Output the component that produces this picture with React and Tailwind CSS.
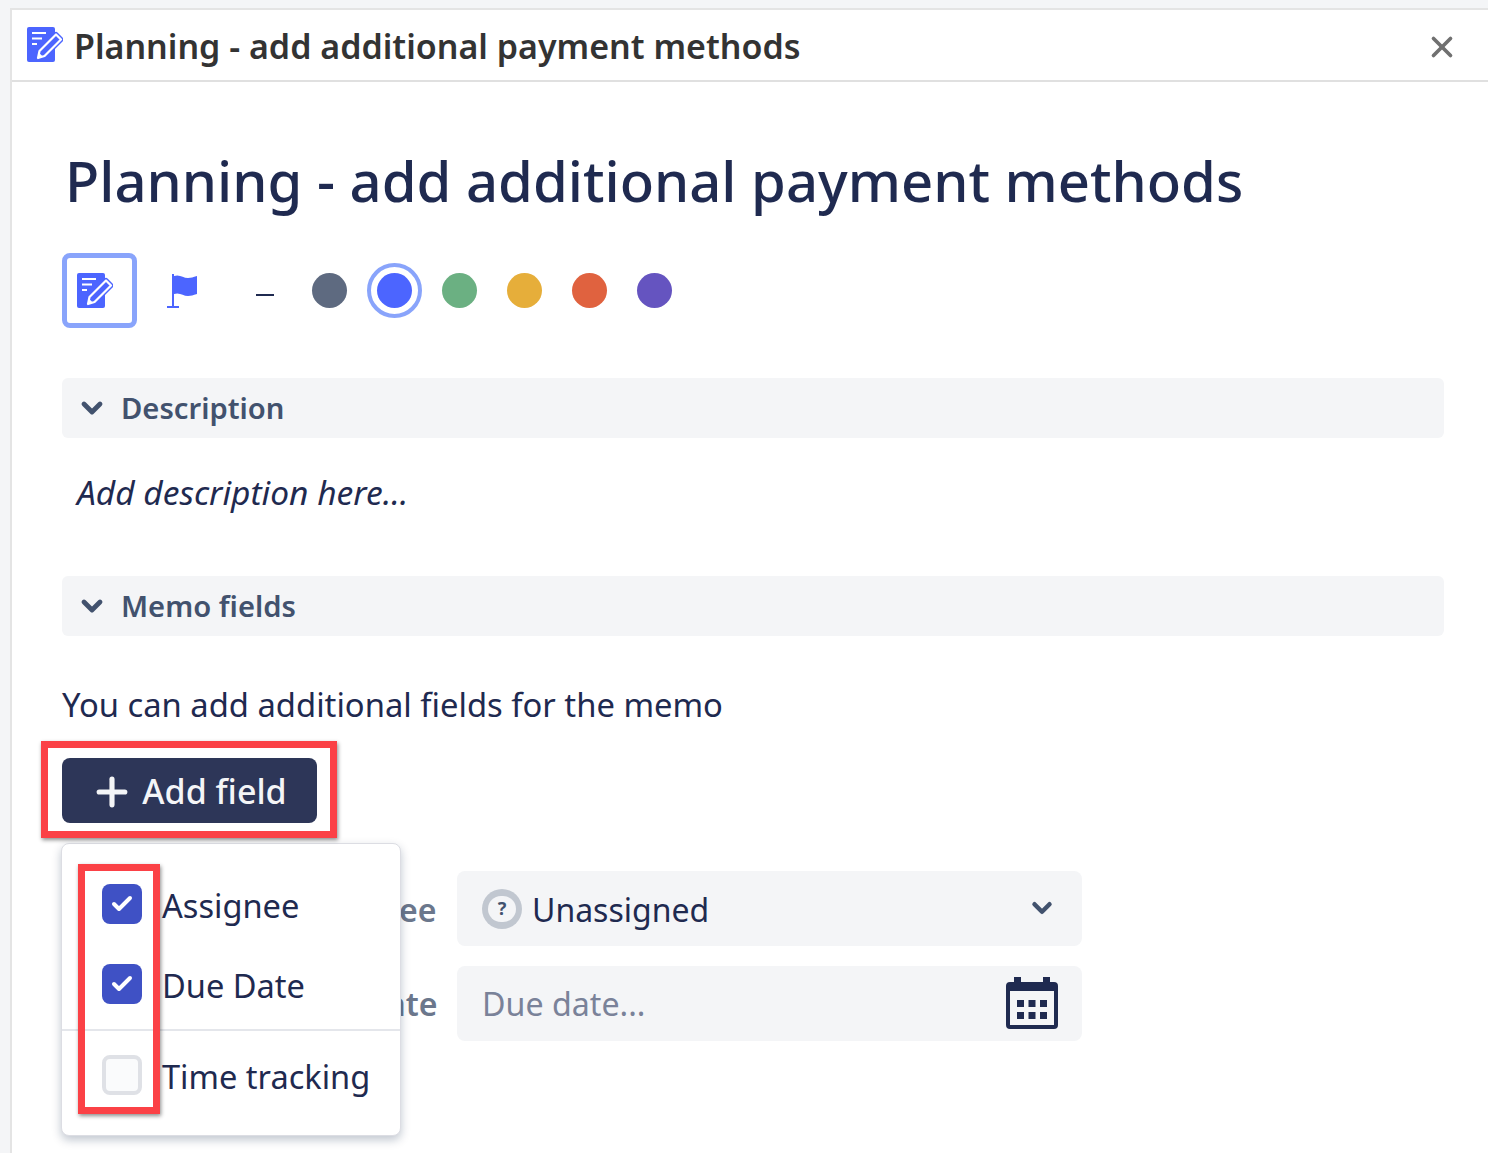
import React from "react";
import { Plus, X, ChevronDown, Check } from "lucide-react";

const PEN = "M11 31l1.5-7L29 7.5l5 5L17.5 29z";

const NoteIcon = ({ className }) => (
  <svg viewBox="0 0 36 36" className={className}>
    <rect x="0" y="0" width="28" height="35" rx="2" fill="#4c65ff" />
    <path d="M5 6h14M5 11.5h10M5 17h5" stroke="#fff" strokeWidth="2.2" />
    <path d={PEN} fill="none" stroke="#4c65ff" strokeWidth="5" strokeLinejoin="round" />
    <path d={PEN} fill="#4c65ff" stroke="#fff" strokeWidth="2.2" strokeLinejoin="round" />
    <path d="M11 31l1.2-5 3.6 3.6z" fill="#fff" />
  </svg>
);

const FlagIcon = ({ className }) => (
  <svg viewBox="0 0 32 36" className={className}>
    <path d="M2 35h12v-2H9V1H7v32H2z" fill="#4c65ff" />
    <path d="M9 3c6-2 9 2 14 2 3 0 5-1 9-2v18c-4 1-6 2-9 2-5 0-8-4-14-2z" fill="#4c65ff" />
  </svg>
);

const CalendarIcon = ({ className }) => (
  <svg viewBox="0 0 54 54" className={className}>
    <path d="M9 1h7v5h22V1h7v5h4a4 4 0 0 1 4 4v39a4 4 0 0 1-4 4H5a4 4 0 0 1-4-4V10a4 4 0 0 1 4-4h4z" fill="#1f2a50" />
    <rect x="5" y="15" width="44" height="34" fill="#f4f5f7" />
    <path d="M12 24h7v7h-7zM23.5 24h7v7h-7zM35 24h7v7h-7zM12 36h7v7h-7zM23.5 36h7v7h-7zM35 36h7v7h-7z" fill="#1f2a50" />
  </svg>
);

const UnassignedIcon = () => (
  <div className="w-10 h-10 rounded-full bg-[#c1c7d0] flex items-center justify-center">
    <div className="w-[28px] h-[26px] rounded-full bg-[#f4f5f7] flex items-center justify-center text-[18px] font-bold text-[#42526e]">?</div>
  </div>
);

const SectionHeader = ({ title }) => (
  <div className="h-[60px] rounded-md bg-[#f4f5f7] flex items-center pl-[14px] gap-[13px]">
    <ChevronDown className="w-[32px] h-[32px] text-[#42526e]" strokeWidth={3.6} />
    <span className="mt-[2px] text-[29.2px] font-semibold text-[#42526e]">{title}</span>
  </div>
);

const Swatch = ({ color }) => (
  <div className="w-[35px] h-[35px] rounded-full" style={{ backgroundColor: color }} />
);

const MenuItem = ({ label, checked, className }) => (
  <div className={`flex items-center h-10 gap-[20px] pl-[40px] ${className}`}>
    {checked ? (
      <div className="w-10 h-10 rounded-lg bg-[#3f51c5] flex items-center justify-center">
        <Check className="w-6 h-6 text-white" strokeWidth={4} />
      </div>
    ) : (
      <div className="w-10 h-10 rounded-lg border-[4px] border-[#dfe1e6] bg-[#fafbfc]" />
    )}
    <span className="mt-[4px] text-[32.6px] leading-[40px] text-[#1f2a50]">{label}</span>
  </div>
);

export default function App() {
  return (
    <div className="h-[1153px] overflow-hidden bg-[#f4f5f7] pt-2 pl-[10px] font-['Noto_Sans',sans-serif]">
      <div className="h-full border-t-2 border-l-2 border-[#e4e4e4] bg-white">
        <div className="h-[72px] border-b-2 border-[#e0e0e0] flex items-center pl-[15px] pr-[29px]">
          <NoteIcon className="w-[36px] h-[36px]" />
          <span className="ml-[11px] mt-[2px] text-[34px] font-semibold text-[#333333] flex-1">
            Planning - add additional payment methods
          </span>
          <X className="mt-[4px] w-[34px] h-[34px] text-[#707070]" strokeWidth={2.6} />
        </div>

        <div className="relative pl-[50px] pr-[44px]">
          <h1 className="ml-[3px] pt-[58px] text-[56.2px] leading-[80px] font-medium text-[#1f2a50]">
            Planning - add additional payment methods
          </h1>

          <div className="mt-[33px] flex items-center h-[75px]">
            <div className="w-[75px] h-[75px] rounded-lg border-[5px] border-[#89a4fb] flex items-center justify-center">
              <NoteIcon className="mr-[10px] w-[36px] h-[36px]" />
            </div>
            <FlagIcon className="ml-[28px] w-[32px] h-[36px]" />
            <span className="ml-[59px] w-[18px] h-[2px] bg-[#1f2a50] mt-2" />
            <div className="ml-[38px] flex items-center gap-[30px]">
              <Swatch color="#5e6a80" />
              <div className="w-[55px] h-[55px] -mx-[10px] rounded-full border-[4px] border-[#89a4fb] flex items-center justify-center">
                <Swatch color="#4c65ff" />
              </div>
              <Swatch color="#6bb082" />
              <Swatch color="#e6ae3a" />
              <Swatch color="#e0623f" />
              <Swatch color="#6554c0" />
            </div>
          </div>

          <div className="mt-[50px]">
            <SectionHeader title="Description" />
          </div>
          <p className="mt-[31px] pl-[15px] text-[33.5px] leading-[46px] italic text-[#1f2a50]">Add description here...</p>

          <div className="mt-[61px]">
            <SectionHeader title="Memo fields" />
          </div>
          <p className="mt-[46px] text-[32.75px] leading-[46px] text-[#1f2a50]">You can add additional fields for the memo</p>

          <button className="mt-[30px] w-[255px] h-[65px] pt-[2px] rounded-lg bg-[#2d3658] flex items-center justify-center gap-[8px] text-[34px] font-medium text-[#f4f5f7]">
            <Plus className="-ml-[2px] w-[44px] h-[44px]" strokeWidth={2.8} />
            Add field
          </button>

          <div className="mt-[48px] flex flex-col gap-[20px] pl-[395px]">
            <div className="w-[625px] h-[75px] rounded-lg bg-[#f4f5f7] flex items-center pl-[25px] pr-[25px] gap-[10px]">
              <UnassignedIcon />
              <span className="flex-1 mt-[2px] text-[32px] text-[#1f2a50]">Unassigned</span>
              <ChevronDown className="w-[30px] h-[30px] mb-[2px] text-[#42526e]" strokeWidth={3.6} />
            </div>
            <div className="w-[625px] h-[75px] rounded-lg bg-[#f4f5f7] flex items-center pl-[25px] pr-[23px]">
              <span className="flex-1 mt-[2px] text-[32.2px] text-[#7a8299]">Due date...</span>
              <CalendarIcon className="w-[54px] h-[54px] mb-[2px]" />
            </div>
          </div>

          {/* labels sitting behind the dropdown */}
          <span className="absolute left-[387px] top-[804px] text-[32px] font-semibold text-[#6b778c]">ee</span>
          <span className="absolute left-[375px] top-[898px] text-[32px] font-semibold text-[#6b778c]">ate</span>

          {/* dropdown */}
          <div className="absolute left-[49px] top-[761px] w-[340px] h-[293px] rounded-lg bg-white border border-[#dcdde3] shadow-[0_4px_10px_rgba(9,30,66,0.25)]">
            <MenuItem label="Assignee" checked className="mt-[40px]" />
            <MenuItem label="Due Date" checked className="mt-[40px]" />
            <div className="mt-[25px] h-[2px] bg-[#e4e6eb]" />
            <MenuItem label="Time tracking" className="mt-[24px]" />
          </div>

          {/* red annotations */}
          <div className="absolute left-[29px] top-[659px] w-[296px] h-[97px] border-[7px] border-[#fb4146] shadow-[1px_2px_4px_rgba(0,0,0,0.45)] pointer-events-none" />
          <div className="absolute left-[66px] top-[782px] w-[82px] h-[250px] border-[7px] border-[#fb4146] shadow-[1px_2px_4px_rgba(0,0,0,0.45)] pointer-events-none" />
        </div>
      </div>
    </div>
  );
}
